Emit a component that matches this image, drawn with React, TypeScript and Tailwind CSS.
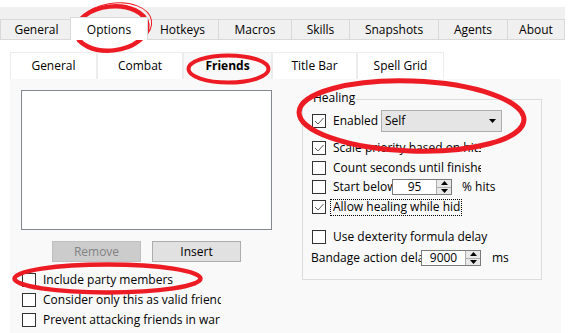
import React from "react";

const Check = ({ checked }: { checked?: boolean }) => (
  <div className="w-[14px] h-[14px] shrink-0 border border-[#333333] bg-white">
    {checked && (
      <svg width="12" height="12" viewBox="0 0 12 12" className="block">
        <path d="M2 6 L5 9 L10.5 3" fill="none" stroke="#5a5a5a" strokeWidth="1" />
      </svg>
    )}
  </div>
);

const Numeric = ({ value }: { value: string }) => (
  <div className="flex w-[60px] h-[16px] shrink-0 border border-[#7a7a7a] bg-white">
    <div className="flex-1 flex items-center justify-center leading-none">{value}</div>
    <div className="w-[15px] flex flex-col border-l border-[#acacac] bg-[#e9e9e9]">
      <div className="flex-1 flex items-center justify-center border-b border-[#acacac]">
        <svg width="7" height="4" viewBox="0 0 7 4" className="block">
          <path d="M0 4 L3.5 0 L7 4 Z" fill="#000" />
        </svg>
      </div>
      <div className="flex-1 flex items-center justify-center">
        <svg width="7" height="4" viewBox="0 0 7 4" className="block">
          <path d="M0 0 L7 0 L3.5 4 Z" fill="#000" />
        </svg>
      </div>
    </div>
  </div>
);

const outerTabs = [
  { label: "General", w: "w-[72px]" },
  { label: "Options", w: "w-[78px]", selected: true },
  { label: "Hotkeys", w: "w-[72px]" },
  { label: "Macros", w: "w-[73px]" },
  { label: "Skills", w: "w-[58px]" },
  { label: "Snapshots", w: "w-[89px]" },
  { label: "Agents", w: "w-[69px]" },
  { label: "About", w: "w-[58px]", last: true },
];

const innerTabs = [
  { label: "General", w: "w-[87px]" },
  { label: "Combat", w: "w-[86px]" },
  { label: "Friends", w: "w-[89px]", selected: true },
  { label: "Title Bar", w: "w-[85px]" },
  { label: "Spell Grid", w: "w-[87px]" },
];

export default function App() {
  return (
    <div className="relative w-[576px] h-[333px] overflow-hidden bg-white font-['Open_Sans','Noto_Sans',sans-serif] text-[12px] leading-[16px] text-black">
      <div className="w-[565px] pt-[7px]">
        {/* outer tab header */}
        <div className="flex items-end h-[33px] bg-[#f0f0f0]">
          {outerTabs.map((t) =>
            t.selected ? (
              <div
                key={t.label}
                className={`${t.w} -mx-[2px] relative z-10 h-[23px] pt-[2px] flex items-center justify-center bg-white border-l border-t border-r border-[#d9d9d9]`}
              >
                {t.label}
              </div>
            ) : (
              <div
                key={t.label}
                className={`${t.w} h-[21px] flex items-center justify-center bg-[#f0f0f0] border-l border-t border-b border-[#d9d9d9] ${t.last ? "border-r" : ""}`}
              >
                {t.label}
              </div>
            )
          )}
        </div>

        {/* outer page */}
        <div className="bg-white pl-[10px] pt-[12px] h-[293px]">
          <div className="flex h-[27px]">
            {innerTabs.map((t) => (
              <div
                key={t.label}
                className={`${t.w} h-[27px] flex items-center justify-center border-l border-t border-r border-[#ececec] ${
                  t.selected ? "bg-[#f9f9f9] font-bold" : "bg-white"
                }`}
              >
                {t.label}
              </div>
            ))}
          </div>

          {/* inner page */}
          <div className="flex w-[551px] h-[254px] bg-[#f9f9f9]">
            {/* left column */}
            <div className="ml-[11px] mt-[11px] w-[251px] flex flex-col">
              <div className="h-[140px] border border-[#828790] bg-white" />
              <div className="flex mt-[11px] ml-[31px] gap-[11px]">
                <div className="w-[89px] h-[21px] flex items-center justify-center bg-[#cccccc] border border-[#bfbfbf] text-[#838383]">
                  Remove
                </div>
                <div className="w-[89px] h-[21px] flex items-center justify-center bg-[#e1e1e1] border border-[#adadad]">
                  Insert
                </div>
              </div>
              <div className="mt-[8px] ml-[1px] flex flex-col">
                {["Include party members", "Consider only this as valid friends", "Prevent attacking friends in war"].map((l) => (
                  <div key={l} className="h-[20px] flex items-center">
                    <Check />
                    <div className="ml-[7px] w-[178px] overflow-hidden whitespace-nowrap">{l}</div>
                  </div>
                ))}
              </div>
            </div>

            {/* healing group */}
            <div className="relative ml-[30px] mt-[20px] w-[240px] h-[181px] border border-[#dcdcdc] pl-[9px]">
              <div className="absolute left-[9px] top-[-10px] px-[1px] bg-[#f9f9f9]">Healing</div>

              <div className="mt-[10px] h-[22px] flex items-center">
                <Check checked />
                <div className="ml-[7px] w-[48px] whitespace-nowrap">Enabled</div>
                <div className="relative w-[121px] h-[22px] flex items-center pl-[3px] bg-[#e5e5e5] border border-[#adadad]">
                  Self
                  <svg width="7" height="4" viewBox="0 0 7 4" className="absolute left-[107px] top-[8px]">
                    <path d="M0 0 L7 0 L3.5 4 Z" fill="#000" />
                  </svg>
                </div>
              </div>

              <div className="mt-[6px] h-[20px] flex items-center">
                <Check checked />
                <div className="ml-[7px] w-[148px] overflow-hidden whitespace-nowrap">Scale priority based on hits</div>
              </div>
              <div className="h-[19px] flex items-center">
                <Check />
                <div className="ml-[7px] w-[148px] overflow-hidden whitespace-nowrap">Count seconds until finished</div>
              </div>
              <div className="h-[20px] flex items-center">
                <Check />
                <div className="ml-[7px] w-[59px] overflow-hidden whitespace-nowrap">Start below</div>
                <Numeric value="95" />
                <div className="ml-[10px] whitespace-nowrap">% hits</div>
              </div>
              <div className="h-[20px] flex items-center">
                <Check checked />
                <div className="ml-[4px] w-[132px] h-[17px] pl-[2px] flex items-center border border-dotted border-[#000] overflow-hidden whitespace-nowrap">
                  Allow healing while hidden
                </div>
              </div>

              <div className="mt-[10px] h-[20px] flex items-center">
                <Check />
                <div className="ml-[7px] whitespace-nowrap">Use dexterity formula delay</div>
              </div>
              <div className="mt-[1px] h-[20px] flex items-center">
                <div className="-ml-[1px] w-[110px] overflow-hidden whitespace-nowrap">Bandage action delay</div>
                <Numeric value="9000" />
                <div className="ml-[11px] whitespace-nowrap">ms</div>
              </div>
            </div>
          </div>
        </div>
      </div>

      {/* red annotation marks */}
      <svg
        width="576"
        height="333"
        viewBox="0 0 576 333"
        className="absolute left-0 top-0 pointer-events-none"
      >
        <g fill="none" stroke="#ed1c24" strokeLinecap="round">
          <ellipse cx="111.5" cy="28.5" rx="36" ry="22" strokeWidth="4.5" transform="rotate(-6 111.5 28.5)" />
          <ellipse cx="113" cy="27" rx="39" ry="23.5" strokeWidth="1" transform="rotate(-10 113 27)" />
          <ellipse cx="228.5" cy="69" rx="40" ry="13.5" strokeWidth="4" />
          <ellipse cx="411.5" cy="116" rx="112.5" ry="35" strokeWidth="5" transform="rotate(2 411.5 116)" />
          <ellipse cx="107.5" cy="278.5" rx="93" ry="14" strokeWidth="4.5" />
        </g>
      </svg>
    </div>
  );
}
